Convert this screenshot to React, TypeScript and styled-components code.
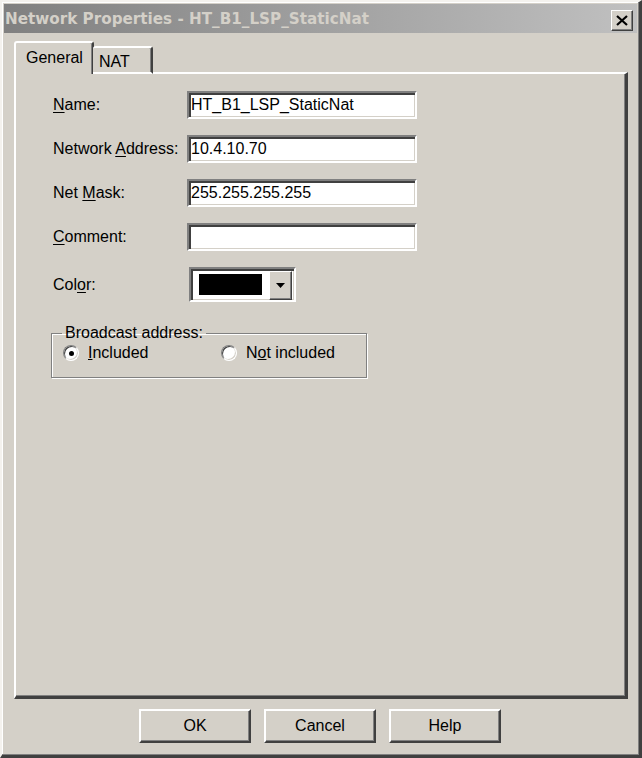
import React from 'react';
import styled, { createGlobalStyle } from 'styled-components';

const GlobalStyle = createGlobalStyle`
  html, body {
    margin: 0;
    padding: 0;
    background: #d4d0c8;
  }
  body {
    font-family: "Liberation Sans", Arial, sans-serif;
    font-size: 16px;
    color: #000;
  }
`;

const fields = [
  { label: 'Name:', key: 'N', rest: 'ame:', pre: '', value: 'HT_B1_LSP_StaticNat' },
  { label: 'Network Address:', key: 'A', rest: 'ddress:', pre: 'Network ', value: '10.4.10.70' },
  { label: 'Net Mask:', key: 'M', rest: 'ask:', pre: 'Net ', value: '255.255.255.255' },
  { label: 'Comment:', key: 'C', rest: 'omment:', pre: '', value: '' },
];

const App = () => {
  return (
    <>
      <GlobalStyle />
      <Window>
        <TitleBar>
          <Title>Network Properties - HT_B1_LSP_StaticNat</Title>
          <CloseButton aria-label="Close">
            <svg width="12" height="11" viewBox="0 0 12 11">
              <path d="M1 1 L11 10 M11 1 L1 10" stroke="#000" strokeWidth="2.2" />
            </svg>
          </CloseButton>
        </TitleBar>
        <Body>
          <TabStrip>
            <Tab active>General</Tab>
            <Tab>NAT</Tab>
          </TabStrip>
          <TabPanel>
            <Form>
              {fields.map(f => (
                <React.Fragment key={f.label}>
                  <Label>
                    {f.pre}
                    <u>{f.key}</u>
                    {f.rest}
                  </Label>
                  <TextInput defaultValue={f.value} />
                </React.Fragment>
              ))}
              <Label>
                Col<u>o</u>r:
              </Label>
              <ColorCombo>
                <Swatch />
                <DropButton>
                  <svg width="9" height="5" viewBox="0 0 9 5">
                    <path d="M0 0 H9 L4.5 5 Z" fill="#000" />
                  </svg>
                </DropButton>
              </ColorCombo>
            </Form>
            <GroupBox>
              <Legend>Broadcast address:</Legend>
              <RadioRow>
                <RadioItem wide>
                  <Radio checked />
                  <span>
                    <u>I</u>ncluded
                  </span>
                </RadioItem>
                <RadioItem>
                  <Radio />
                  <span>
                    N<u>o</u>t included
                  </span>
                </RadioItem>
              </RadioRow>
            </GroupBox>
          </TabPanel>
          <ButtonRow>
            <Button>OK</Button>
            <Button>Cancel</Button>
            <Button>Help</Button>
          </ButtonRow>
        </Body>
      </Window>
    </>
  );
};

const Window = styled.div`
  box-sizing: border-box;
  width: 642px;
  height: 758px;
  display: flex;
  flex-direction: column;
  background: #d4d0c8;
  border-style: solid;
  border-width: 2px 3px 3px 2px;
  border-color: #f4f2ee #404040 #404040 #f4f2ee;
  box-shadow: inset -1px -1px 0 #808080, inset 1px 1px 0 #ffffff;
  padding: 2px;
`;

const TitleBar = styled.div`
  height: 29px;
  display: flex;
  align-items: center;
  justify-content: space-between;
  padding: 0 4px 0 1px;
  background: linear-gradient(to right, #808080, #c0c0c0);
`;

const Title = styled.div`
  font-family: "DejaVu Sans", Tahoma, sans-serif;
  font-weight: bold;
  font-size: 15.2px;
  color: #d4d0c8;
`;

const CloseButton = styled.button`
  box-sizing: border-box;
  width: 22px;
  height: 21px;
  padding: 0;
  margin-top: 3px;
  display: flex;
  align-items: center;
  justify-content: center;
  background: #d4d0c8;
  border: 1px solid;
  border-color: #ffffff #404040 #404040 #ffffff;
  box-shadow: inset -1px -1px 0 #808080;
`;

const Body = styled.div`
  flex: 1;
  display: flex;
  flex-direction: column;
  padding: 8px 9px 10px 10px;
`;

const TabStrip = styled.div`
  display: flex;
  align-items: flex-end;
  height: 33px;
  position: relative;
  z-index: 1;
  margin-bottom: -2px;
`;

const Tab = styled.div<{ active?: boolean }>`
  box-sizing: border-box;
  height: ${({ active }) => (active ? '33px' : '28px')};
  padding: ${({ active }) => (active ? '5px 9px 0 10px' : '4px 21px 0 6px')};
  margin-left: ${({ active }) => (active ? '0' : '-1px')};
  background: #d4d0c8;
  border-style: solid;
  border-width: 2px 2px 0 2px;
  border-color: #ffffff #404040 transparent #ffffff;
  border-radius: 3px 3px 0 0;
  box-shadow: inset -1px 0 0 #808080;
  font-size: 16px;
  line-height: 20px;
  ${({ active }) => (active ? 'padding-bottom: 2px;' : 'border-bottom: 2px solid #ffffff; border-left: none;')}
`;

const TabPanel = styled.div`
  flex: 1;
  box-sizing: border-box;
  border-style: solid;
  border-width: 2px 3px 3px 2px;
  border-color: #ffffff #404040 #404040 #ffffff;
  box-shadow: inset -1px -1px 0 #808080;
  padding: 17px 0 0 37px;
`;

const Form = styled.div`
  display: grid;
  grid-template-columns: 134px 230px;
  row-gap: 16px;
  align-items: center;
`;

const Label = styled.label`
  font-size: 16px;
  color: #000;
  u {
    text-underline-offset: 2px;
  }
`;

const TextInput = styled.input`
  box-sizing: border-box;
  width: 230px;
  height: 28px;
  padding: 0 2px;
  font-family: "Liberation Sans", Arial, sans-serif;
  font-size: 16px;
  color: #000;
  background: #fff;
  border-style: solid;
  border-width: 2px;
  border-color: #808080 #ffffff #ffffff #808080;
  box-shadow: inset 2px 2px 0 #404040, inset -1px -1px 0 #d4d0c8;
  outline: none;
`;

const ColorCombo = styled.div`
  box-sizing: border-box;
  width: 107px;
  height: 35px;
  margin-left: 2px;
  display: flex;
  align-items: center;
  justify-content: space-between;
  padding: 0 2px 0 8px;
  background: #fff;
  border-style: solid;
  border-width: 2px;
  border-color: #808080 #ffffff #ffffff #808080;
  box-shadow: inset 2px 2px 0 #404040, inset -1px -1px 0 #d4d0c8;
`;

const Swatch = styled.div`
  width: 63px;
  height: 21px;
  background: #000;
`;

const DropButton = styled.div`
  box-sizing: border-box;
  width: 23px;
  height: 29px;
  margin-top: 1px;
  display: flex;
  align-items: center;
  justify-content: center;
  background: #d4d0c8;
  border: 1px solid;
  border-color: #ffffff #404040 #404040 #ffffff;
  box-shadow: inset -1px -1px 0 #808080;
`;

const GroupBox = styled.fieldset`
  box-sizing: border-box;
  width: 316px;
  min-width: 0;
  height: 53px;
  margin: 23px 0 0 -2px;
  padding: 0 0 0 11px;
  border: 1px solid #808080;
  box-shadow: 1px 1px 0 #ffffff, inset 1px 1px 0 #ffffff;
`;

const Legend = styled.legend`
  padding: 0 3px;
  margin-left: -1px;
  font-size: 16px;
  line-height: 16px;
`;

const RadioRow = styled.div`
  display: flex;
  align-items: center;
  margin-top: 3px;
`;

const RadioItem = styled.label<{ wide?: boolean }>`
  display: flex;
  align-items: center;
  gap: 9px;
  width: ${({ wide }) => (wide ? '158px' : 'auto')};
  font-size: 16px;
`;

const Radio = styled.span<{ checked?: boolean }>`
  box-sizing: border-box;
  width: 16px;
  height: 16px;
  border-radius: 50%;
  background: #fff;
  border: 1px solid;
  border-color: #808080 #ffffff #ffffff #808080;
  box-shadow: inset 1px 1px 0 #404040, inset -1px -1px 0 #d4d0c8;
  display: flex;
  align-items: center;
  justify-content: center;
  &::after {
    content: '';
    width: 5px;
    height: 5px;
    border-radius: 50%;
    background: ${({ checked }) => (checked ? '#000' : 'transparent')};
  }
`;

const ButtonRow = styled.div`
  display: flex;
  justify-content: center;
  gap: 13px;
  padding: 10px 0 0 0;
  margin-left: -2px;
`;

const Button = styled.button`
  box-sizing: border-box;
  width: 112px;
  height: 34px;
  font-family: "Liberation Sans", Arial, sans-serif;
  font-size: 16px;
  color: #000;
  background: #d4d0c8;
  border-style: solid;
  border-width: 2px;
  border-color: #ffffff #404040 #404040 #ffffff;
  box-shadow: inset -1px -1px 0 #808080;
  padding: 0;
`;

export default App;
